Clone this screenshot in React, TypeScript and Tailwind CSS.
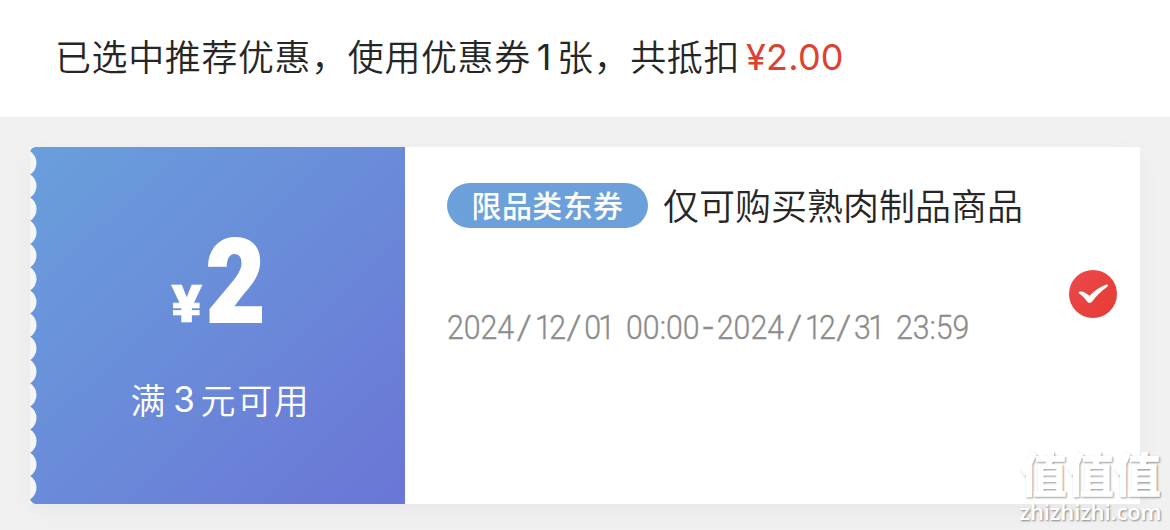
import React from 'react';

const coupon = {
    amount: '2',
    threshold: '3',
    tag: '限品类东券',
    title: '仅可购买熟肉制品商品',
    start: ['2024', '12', '01', '00:00'],
    end: ['2024', '12', '31', '23:59'],
};

const TEETH = 15;
const PITCH = 23.2;

// Stamp-like bites along the left edge of the coupon
function TornEdge({ className }: { className?: string }) {
    let d = 'M-2 0 H5 Q1 1 0.3 4.2';
    for (let i = 0; i < TEETH; i++) {
        d += ` a13.9 13.9 0 0 1 0 ${PITCH}`;
    }
    d += ' Q1 356 6 357 H-2 Z';

    return (
        <svg className={className} width="8" height="357" viewBox="0 0 8 357" fill="#f3f5f7">
            <path d={d} />
        </svg>
    );
}

function CheckBadge() {
    return (
        <svg width="48" height="48" viewBox="0 0 48 48">
            <defs>
                <linearGradient id="badge" x1="0" y1="0" x2="1" y2="1">
                    <stop offset="0" stopColor="#ec4a4c" />
                    <stop offset="1" stopColor="#e53b32" />
                </linearGradient>
            </defs>
            <circle cx="24" cy="24" r="24" fill="url(#badge)" />
            <path
                d="M10 21.9 C11.5 21.2 13.8 21.3 16 22.7 L20.6 25.8 C25.5 20.6 31 16.8 37.6 14.6 C39.2 14.2 39.4 15.5 38.6 16.6 C32.8 20.6 27.2 26.3 23 31.8 C21.7 33.4 19.7 33.3 18.4 31.7 C16 28.6 13.2 25.6 10.2 23.4 C9.6 22.8 9.5 22.2 10 21.9 Z"
                fill="#fff"
            />
        </svg>
    );
}

function Slash() {
    return <span className="mx-[5px] inline-block scale-x-125">/</span>;
}

function DateText({ parts }: { parts: string[] }) {
    const [year, month, day, time] = parts;
    return (
        <span>
            {year}<Slash />
            <span className="tracking-[-3px]">{month}</span><Slash />
            <span className="tracking-[-3px]">{day}</span>
            <span className="ml-[7px]"> {time}</span>
        </span>
    );
}

export default function App() {
    return (
        <div className="relative flex h-[530px] w-[1170px] flex-col overflow-hidden bg-[#f1f1f1] font-['Noto_Sans_CJK_SC',sans-serif]">
            <header className="flex h-[117px] items-center bg-white pb-2 pl-[55px] text-[36px] font-[350] tracking-[0.6px] whitespace-nowrap text-[#262626]">
                <span>已选中推荐优惠，使用优惠券</span>
                <span className="mr-[5px] ml-1.5 pt-1 font-['Inter',sans-serif] font-normal">1</span>
                <span>张，共抵扣</span>
                <span className="ml-1.5 pt-1 font-['Inter',sans-serif] font-normal tracking-[0.2px] text-[#dc4132]">¥2.00</span>
            </header>

            <main className="px-[30px] pt-[30px]">
                <section className="flex h-[357px] w-[1110px] bg-white shadow-[0_8px_24px_rgba(0,0,0,0.04)]">
                    <div className="relative flex w-[375px] flex-col items-center bg-linear-to-br from-[#699fdb] via-[#6a89d9] via-55% to-[#6a75d5] text-white">
                        <TornEdge className="absolute top-0 left-0" />
                        <div className="mt-[77px] flex items-baseline pl-1 font-['Roboto',sans-serif] font-black">
                            <span className="mr-1 origin-right scale-x-110 text-[52px] leading-none [-webkit-text-stroke:0.6px_white]">¥</span>
                            <span className="-mr-2 origin-left scale-x-[0.88] text-[116px] leading-none [-webkit-text-stroke:2px_white]">
                                {coupon.amount}
                            </span>
                        </div>
                        <p className="mt-[33px] flex pl-1.5 text-[35px] font-[350] tracking-[1.7px]">
                            满<span className="mr-1 ml-1.5 font-['Inter',sans-serif] font-normal">{coupon.threshold}</span>元可用
                        </p>
                    </div>

                    <div className="flex flex-1 items-start justify-between pr-[23px] pl-[42px]">
                        <div className="w-[600px] pt-[30px]">
                            <div className="flex items-center gap-[15px] whitespace-nowrap">
                                <span className="mt-0.5 flex h-[45px] w-[201px] items-center justify-center rounded-full bg-[#6ca0db] pb-0.5 text-[30px] font-medium tracking-[0.4px] text-white">
                                    {coupon.tag}
                                </span>
                                <span className="text-[36px] font-[350] text-[#262626]">{coupon.title}</span>
                            </div>
                            <p className="mt-[76px] origin-left scale-x-[0.89] font-['Roboto',sans-serif] text-[34px] leading-10 font-light whitespace-nowrap text-[#8c8c8c] [-webkit-text-stroke:0.4px_#8c8c8c]">
                                <DateText parts={coupon.start} />
                                <span className="mx-0.5 inline-block font-['Inter',sans-serif]">-</span>
                                <DateText parts={coupon.end} />
                            </p>
                        </div>
                        <div className="mt-[123px]">
                            <CheckBadge />
                        </div>
                    </div>
                </section>
            </main>

            <div className="absolute top-[448px] left-[1019px] flex w-[143px] flex-col items-center whitespace-nowrap text-white">
                <span className="text-[47px] leading-[48px] font-black [text-shadow:1px_1px_2px_rgba(0,0,0,0.4)]">值值值</span>
                <span className="mt-1 font-['Open_Sans',sans-serif] text-[22px] leading-[22px] font-semibold tracking-[-0.1px] [text-shadow:1px_1px_2px_rgba(0,0,0,0.45)]">
                    zhizhizhi.com
                </span>
            </div>
        </div>
    );
}
